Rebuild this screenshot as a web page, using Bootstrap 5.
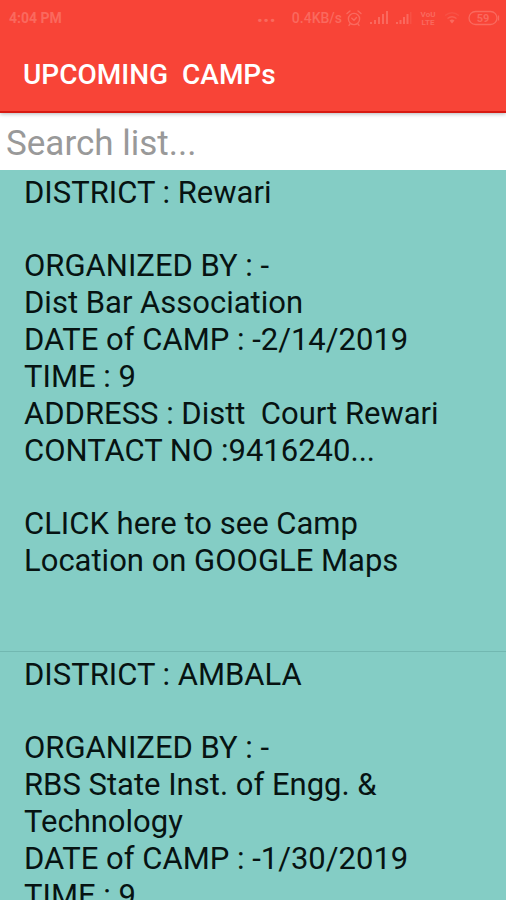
<!DOCTYPE html>
<html lang="en">
<head>
<meta charset="utf-8">
<meta name="viewport" content="width=device-width, initial-scale=1">
<title>Upcoming Camps</title>
<link rel="stylesheet" href="https://cdn.jsdelivr.net/npm/bootstrap@5.3.0/dist/css/bootstrap.min.css">
<style>
body { font-family: Roboto, "Liberation Sans", sans-serif; color: #071312; background: #84cdc5; }
.app-top { background: #f84437; border-bottom: 2px solid #d81a12; box-shadow: 0 1px 4px rgba(0, 20, 30, .3); z-index: 1; }
.status-bar { height: 36px; padding: 0 6px 0 9px; font-size: 14px; font-weight: 700; color: #fa695e; }
.status-bar svg { display: block; }
.dots { font-size: 22px; line-height: 20px; margin: -6px 16px 0 0; }
.rate { font-weight: 500; }
.app-title { height: 75px; padding: 3px 23px 0; font-size: 28px; line-height: 36px; font-weight: 500; white-space: pre-wrap; }
.search-box, .search-box:focus { border: 0; box-shadow: none; background: #fff; height: 57px; padding: 4px 6px 0; font-size: 35px; line-height: 48px; color: #333; }
.search-box::placeholder { color: #999; opacity: 1; }
.camp-list { background: #84cdc5; scrollbar-width: none; }
.camp { background: #84cdc5; color: #071312; border: 0; border-bottom: 1px solid #72b8b1; padding: 4px 24px 72px; font-size: 31px; line-height: 37px; white-space: pre-wrap; }
.camp p, .camp ul { margin-bottom: 36px; }
.camp a { color: inherit; }
</style>
<script src="https://cdn.jsdelivr.net/npm/bootstrap@5.3.0/dist/js/bootstrap.bundle.min.js"></script>
</head>
<body>
<div class="d-flex flex-column vh-100 overflow-hidden">
  <header class="app-top position-relative flex-shrink-0">
    <div class="status-bar d-flex align-items-center">
      <span class="me-auto">4:04 PM</span>
      <span class="dots">...</span>
      <span class="rate">0.4KB/s</span>
      <svg class="ms-1" width="16" height="18" viewBox="0 0 16 18" fill="none" stroke="currentColor" stroke-width="1.4" stroke-linecap="round" aria-hidden="true"><circle cx="8" cy="10" r="5.6"/><path d="M1 4.5 4 2M15 4.5 12 2M5.8 9.2 8 11.2 10.5 8.5M4 15l-1 1.4M12 15l1 1.4"/></svg>
      <svg class="ms-2" width="18" height="14" viewBox="0 0 18 14" fill="currentColor" aria-hidden="true"><path d="M0 11h2v2H0zM4 9h2v4H4zM8 6h2v7H8zM12 3h2v10h-2zM16 0h2v13h-2z"/></svg>
      <svg class="ms-2" width="16" height="14" viewBox="0 0 16 14" fill="currentColor" aria-hidden="true"><path d="M0 11h2v2H0zM3.5 9h2v4h-2zM7 6h2v7H7zM10.5 3h2v10h-2z"/><path d="M14 1h1.5v12H14z" opacity=".35"/></svg>
      <svg class="ms-2" width="16" height="16" viewBox="0 0 16 16" fill="currentColor" font-family="Roboto, sans-serif" font-size="8" font-weight="700" text-anchor="middle" aria-hidden="true"><text x="8" y="7">VoU</text><text x="8" y="15">LTE</text></svg>
      <svg class="ms-2" width="16" height="14" viewBox="0 0 16 14" fill="none" stroke="currentColor" stroke-width="1.3" aria-hidden="true"><path d="M1 4.5Q8-1 15 4.5" opacity=".35"/><path d="M3.5 7.5Q8 4 12.5 7.5" opacity=".7"/><path d="M5.500 9.500Q8 7.500 10.500 9.500L8 12.500z" fill="currentColor" stroke="none"/></svg>
      <svg class="ms-2" width="32" height="16" viewBox="0 0 32 16" fill="none" stroke="currentColor" stroke-width="1.3" aria-hidden="true"><rect x="1" y="1.5" width="28" height="13" rx="6.5"/><path d="M30.5 5.5v5"/><text x="15" y="12" fill="currentColor" stroke="none" font-family="Roboto, sans-serif" font-size="11" font-weight="700" text-anchor="middle">59</text></svg>
    </div>
    <h1 class="app-title d-flex align-items-center text-white m-0">UPCOMING  CAMPs</h1>
  </header>
  <form class="flex-shrink-0 m-0" role="search">
    <label class="visually-hidden" for="search">Search list</label>
    <input class="form-control rounded-0 search-box" id="search" type="text" placeholder="Search list...">
  </form>
  <main class="camp-list list-group list-group-flush rounded-0 flex-grow-1 overflow-auto">
    <article class="camp list-group-item"><p>DISTRICT : Rewari</p><ul class="list-unstyled"><li>ORGANIZED BY : -</li><li>Dist Bar Association</li><li>DATE of CAMP : -2/14/2019</li><li>TIME : 9</li><li>ADDRESS : Distt  Court Rewari</li><li>CONTACT NO :9416240...</li></ul><a class="d-block text-decoration-none" href="#map">CLICK here to see Camp Location on GOOGLE Maps</a></article>
    <article class="camp list-group-item"><p>DISTRICT : AMBALA</p><ul class="list-unstyled"><li>ORGANIZED BY : -</li><li>RBS State Inst. of Engg. &amp; Technology</li><li>DATE of CAMP : -1/30/2019</li><li>TIME : 9</li></ul></article>
  </main>
</div>
</body>
</html>
